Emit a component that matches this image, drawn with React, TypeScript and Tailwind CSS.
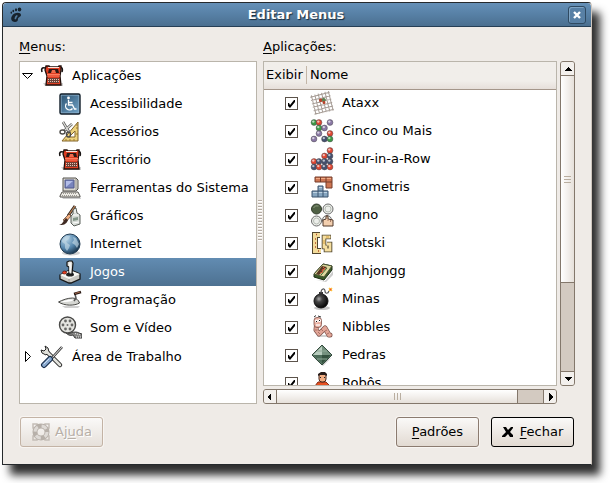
import type { ReactNode } from "react";

const Icon = ({ children }: { children: ReactNode }) => (
  <svg viewBox="0 0 24 24" className="block size-6 shrink-0" aria-hidden="true">
    {children}
  </svg>
);

const Typewriter = () => (
  <Icon>
    <path d="M3 19h20v3H5z" fill="#000" opacity=".18" />
    <path d="M2 8C1 5 2 3 5 4M22 8c1-3 0-5-2-5" fill="none" stroke="#171312" strokeWidth="1.600" />
    <path d="M6 2h3l1 1h8l1-1h2v4l-1 6 1 9H6l1-9-2-6z" fill="#dc3d22" stroke="#21100c" strokeWidth="1.300" />
    <path d="M8 3.500h11" stroke="#fbe2d8" />
    <path d="M9 5h9l1 4H8z" fill="#2c1815" />
    <path d="M11 9l1-3h3l1 3z" fill="#ef6a4b" />
    <path d="M7 10.500h13M7 12h13" stroke="#ff7d5e" />
    <path d="M8 14h11v5H8z" fill="#6d4238" />
    <path d="M8 15.500h11M8 17.500h11" stroke="#e3c3b5" strokeDasharray="1 1" />
  </Icon>
);

const Access = () => (
  <Icon>
    <defs>
      <linearGradient id="accessFill" x1="0" y1="0" x2="1" y2="1">
        <stop offset="0" stopColor="#2f5675" />
        <stop offset="1" stopColor="#6fa0c4" />
      </linearGradient>
    </defs>
    <rect x="2" y="2" width="20" height="20" rx="1.5" fill="#8fb2cc" stroke="#101d28" strokeWidth="1.4" />
    <rect x="3.5" y="3.5" width="17" height="17" fill="url(#accessFill)" />
    <circle cx="10.500" cy="6" r="1.400" fill="#fff" />
    <path d="M10.500 8v5h4l2 4h2M10.500 10.500h4M8.500 11.500a3.800 3.800 0 1 0 6 5" fill="none" stroke="#fff" strokeWidth="1.300" />
  </Icon>
);

const Scissors = () => (
  <Icon>
    <path d="M20 2v19H4z" fill="#edd27d" stroke="#82642b" />
    <path d="M17 11v6h-6z" fill="#fff" stroke="#82642b" />
    <path d="M18 5h2M18 8h2M18 14h2M8 19v2M12 19v2M16 19v2" stroke="#9b7a34" />
    <path d="M5 2l6 10M14 4L6 11" stroke="#555" strokeWidth="2.600" />
    <path d="M5 2l6 10M14 4L6 11" stroke="#deded9" strokeWidth="1.300" />
    <ellipse cx="4.500" cy="12" rx="2.500" ry="2" fill="none" stroke="#4d4b48" strokeWidth="1.400" />
    <ellipse cx="10.500" cy="14.500" rx="2" ry="2.500" fill="none" stroke="#4d4b48" strokeWidth="1.400" />
  </Icon>
);

const Computer = () => (
  <Icon>
    <path d="M3 20h19l1 3H5z" fill="#000" opacity=".2" />
    <path d="M5 2h13l2 2v9l-2 2H5z" fill="#d9d7cf" stroke="#55534f" />
    <path d="M18 3v11" stroke="#9d9b93" />
    <path d="M7 4h9v8H7z" fill="#7884bd" stroke="#535b8b" />
    <path d="M8 5h7l-7 6z" fill="#b3bde8" />
    <path d="M4 16h16l2 4v1H2v-1z" fill="#eceae4" stroke="#55534f" />
    <path d="M5 17.500h14M4 19.500h16" stroke="#99968f" strokeDasharray="1 1" />
  </Icon>
);

const Graphics = () => (
  <Icon>
    <path d="M17 2L10 12" stroke="#302620" strokeWidth="3" />
    <path d="M17 2L10 12" stroke="#bc8355" strokeWidth="1.300" />
    <path d="M11 10l2 2-5 6-3-2z" fill="#f0ae80" stroke="#503225" strokeWidth=".7" />
    <path d="M8 14l2 2c-2 5-5 5-9 5 4-1 4-4 7-7z" fill="#402b23" />
    <path d="M15 6l3-2 1 5 3 2v9l-6 2-3-3v-7l2-2z" fill="#d5dad5" stroke="#5b605b" />
    <path d="M15 11h6M15 19l6-1M17 5v4" stroke="#fff" />
    <path d="M15 14l5-1v3l-5 1z" fill="#839689" />
  </Icon>
);

const Globe = () => (
  <Icon>
    <defs>
      <radialGradient id="globeFill" cx=".3" cy=".25" r=".8">
        <stop offset="0" stopColor="#b9d6e9" />
        <stop offset=".6" stopColor="#5485ac" />
        <stop offset="1" stopColor="#1a354c" />
      </radialGradient>
    </defs>
    <ellipse cx="13" cy="21" rx="9" ry="2.500" fill="#000" opacity=".18" />
    <circle cx="12" cy="12" r="10" fill="url(#globeFill)" stroke="#253f55" />
    <path d="M4 8l4-4 4 0-1 3-3 2 1 2 3 2-1 3-2 3-2-3 0-4-3-2zM15 5l3 1 3 6-2 4-2-3-3-2 2-3z" fill="#c3d8e5" opacity=".65" />
  </Icon>
);

const Joystick = () => (
  <Icon>
    <path d="M2 15l8-4h5l7 3v5l-9 4h-2l-9-4z" fill="#c9c8c2" stroke="#171717" strokeWidth="1.300" />
    <path d="M2 15l9 4 11-5-8-3h-4z" fill="#f8f8f4" />
    <path d="M11 19v3" stroke="#999" />
    <ellipse cx="12" cy="14.500" rx="4" ry="2" fill="#242424" />
    <path d="M11 14V7L9 6V2l2-1h3l1 2-1 11z" fill="#dfdfdb" stroke="#111" strokeWidth="1.200" />
    <path d="M12 2.500v10" stroke="#fff" strokeWidth="1.400" />
    <ellipse cx="6.500" cy="12.500" rx="2" ry="1.500" fill="#ea3f20" stroke="#5f160d" strokeWidth=".7" />
  </Icon>
);

const Trowel = () => (
  <Icon>
    <path d="M4 18h18l-2 2H7z" fill="#000" opacity=".18" />
    <path d="M.5 14c4-2 9-4 14-4 4 0 6 2 7 5-5 3-15 3-21-1z" fill="#d6d7d3" stroke="#4a4a47" />
    <path d="M3 14c5-2 9-3 13-2-4 2-8 2-13 2z" fill="#fff" />
    <path d="M16 13l2-3-1-4" fill="none" stroke="#555" strokeWidth="1.500" />
    <path d="M16 6l7-2" stroke="#2b1a14" strokeWidth="2.800" />
    <path d="M17 5.500l5-1.500" stroke="#a5694d" />
  </Icon>
);

const Reel = () => (
  <Icon>
    <path d="M8 17c4 2 8-3 13 0l3 1v4h-7l-2-3c-3 1-5 0-7-2z" fill="#858583" stroke="#3c3c3c" />
    <path d="M17 17.500l6 1.500M18 21h5" stroke="#eee" strokeDasharray="1 1" />
    <circle cx="9.500" cy="9" r="8" fill="#e4e4e0" stroke="#4a4a48" strokeWidth="1.400" />
    <g fill="#686866">
      <circle cx="7.500" cy="5" r="1.400" /><circle cx="12" cy="5" r="1.400" />
      <circle cx="5" cy="9" r="1.400" /><circle cx="9.500" cy="9" r="1" />
      <circle cx="14" cy="9" r="1.400" /><circle cx="7.500" cy="13" r="1.400" />
      <circle cx="12" cy="13" r="1.400" />
    </g>
  </Icon>
);

const Tools = () => (
  <Icon>
    <path d="M7 7l13 13" stroke="#252525" strokeWidth="4.500" strokeLinecap="round" />
    <path d="M5 1l3 2 1 4-3 3-4-2-1-3 3 1 2-2z" fill="#deded7" stroke="#252525" />
    <path d="M7 7l13 13" stroke="#e2e2dc" strokeWidth="2.600" strokeLinecap="round" />
    <path d="M22 2L12 13" stroke="#222" strokeWidth="2.600" />
    <path d="M22 2L12 13" stroke="#ddd" strokeWidth="1.100" />
    <path d="M10 14l-6 6" stroke="#172c49" strokeWidth="6" strokeLinecap="round" />
    <path d="M10 14l-6 6" stroke="#89a9cf" strokeWidth="3.800" strokeLinecap="round" />
    <path d="M9 14l-5 5" stroke="#d0e0f2" strokeLinecap="round" />
  </Icon>
);

const Ball = ({ x, y, c }: { x: number; y: number; c: string }) => (
  <g>
    <circle cx={x} cy={y} r="2.900" fill={c} stroke="#4b464d" strokeWidth=".5" />
    <circle cx={x - 0.7} cy={y - 0.9} r="1.200" fill="#fff" opacity=".65" />
  </g>
);

const Ataxx = () => (
  <Icon>
    <g transform="rotate(-14 12 12)">
      <path d="M3.500 2v20M7 2v20M10.500 2v20M14 2v20M17.500 2v20M21 2v20M2 3.500h20M2 7h20M2 10.500h20M2 14h20M2 17.500h20M2 21h20" stroke="#a79d96" />
      <circle cx="11.500" cy="9" r="1.800" fill="#b9422a" />
      <circle cx="14.500" cy="9.500" r="2" fill="#5d7f50" />
      <circle cx="14" cy="12" r="1.500" fill="#b9422a" />
    </g>
  </Icon>
);

const Five = () => (
  <Icon>
    <Ball x={4} y={3.5} c="#3b9a45" /><Ball x={9} y={3.5} c="#e04631" /><Ball x={20} y={3.5} c="#8a78a5" />
    <Ball x={9} y={9} c="#3b9a45" /><Ball x={14.5} y={9} c="#8a78a5" />
    <Ball x={9} y={14.5} c="#8a78a5" /><Ball x={20} y={14.5} c="#e04631" />
    <Ball x={4} y={20} c="#8a78a5" /><Ball x={14.5} y={20} c="#44516f" /><Ball x={20} y={20} c="#3b9a45" />
  </Icon>
);

const Four = () => (
  <Icon>
    <Ball x={20} y={3.5} c="#e04631" />
    <Ball x={14.5} y={9} c="#e04631" /><Ball x={20} y={9} c="#44516f" />
    <Ball x={4} y={14.5} c="#e04631" /><Ball x={9} y={14.5} c="#44516f" /><Ball x={14.5} y={14.5} c="#44516f" /><Ball x={20} y={14.5} c="#44516f" />
    <Ball x={4} y={20} c="#44516f" /><Ball x={9} y={20} c="#e04631" /><Ball x={14.5} y={20} c="#44516f" /><Ball x={20} y={20} c="#e04631" />
  </Icon>
);

const Blocks = () => (
  <Icon>
    <path d="M5 2h17v11h-6V7H5z" fill="#cd7653" stroke="#743c2a" />
    <path d="M6 3.500h15" stroke="#f2ab86" />
    <path d="M10.500 2v5M16 2v5h6" stroke="#743c2a" fill="none" />
    <path d="M8 11h5v5h5v6H2v-6h6z" fill="#86a5bf" stroke="#3a536c" />
    <path d="M9 12.500h3M3 17.500h14" stroke="#bfd3e2" />
    <path d="M8 16h5M8 16v6M13 16v6" stroke="#3a536c" />
  </Icon>
);

const Iagno = () => (
  <Icon>
    <circle cx="6.500" cy="6" r="5" fill="#4f6044" stroke="#323c2c" />
    <path d="M3.500 5a4 4 0 0 1 5-2" stroke="#8b9b7d" fill="none" />
    <g fill="#eceeea" stroke="#6b6b6b">
      <circle cx="18" cy="6" r="5" /><circle cx="6.500" cy="18" r="5" /><circle cx="17" cy="17" r="4.500" />
    </g>
    <g fill="none" stroke="#b5bbb3"><circle cx="18" cy="6" r="3" /><circle cx="6.500" cy="18" r="3" /></g>
    <path d="M13 17l3-1v-3h2v3l5 1v6H13z" fill="#f3cfaf" stroke="#51382b" />
    <path d="M18 16v2M20.500 17v2" stroke="#a77c63" />
  </Icon>
);

const Klotski = () => (
  <Icon>
    <g fill="none" strokeLinejoin="miter">
      <path d="M10 4H5v16h6" stroke="#51462f" strokeWidth="6" />
      <path d="M10 4H5v16h6" stroke="#f3dc9a" strokeWidth="4" />
      <path d="M21 6h-7v10h2v3h4v-6h-3" stroke="#51462f" strokeWidth="4.600" />
      <path d="M20.500 6H14v10h2v3h4v-6h-3" stroke="#f6dfa0" strokeWidth="2.800" />
    </g>
    <path d="M6 3.500h1M5 8h1M5 12h1M5 16h1M8 20h1" stroke="#b44a26" strokeWidth="1.500" />
    <path d="M16 6h3M14 9v4" stroke="#d59f3f" />
  </Icon>
);

const Mahjongg = () => (
  <Icon>
    <path d="M6 21l9 1 8-10v4l-7 7z" fill="#000" opacity=".2" />
    <path d="M4 15l9-10 9 2v4l-8 10-10-3z" fill="#3a5a28" stroke="#1c2b14" />
    <path d="M4 15l9-10 9 2-8 11z" fill="#ded99f" stroke="#4b5535" />
    <path d="M12 7l5 1-8 8-3-1z" fill="#593823" />
    <path d="M13 8l2 2-3 1 1 2-3 1" fill="none" stroke="#d95b3a" />
    <path d="M17 9l-6 7" stroke="#3e632f" />
  </Icon>
);

const Bomb = () => (
  <Icon>
    <defs>
      <radialGradient id="bombFill" cx=".35" cy=".35" r=".65">
        <stop offset="0" stopColor="#aaa" />
        <stop offset=".35" stopColor="#444" />
        <stop offset="1" stopColor="#080808" />
      </radialGradient>
    </defs>
    <ellipse cx="12" cy="21" rx="8" ry="2" fill="#000" opacity=".22" />
    <circle cx="11" cy="14" r="7" fill="url(#bombFill)" stroke="#111" />
    <path d="M9 5h4v3H9z" fill="#333" />
    <path d="M11 6c0-5 4-5 4-2s3 3 4 0" fill="none" stroke="#555" strokeWidth="1.200" />
    <path d="M19 1l3 3M19 4l3-3" stroke="#ffca3d" strokeWidth="1.600" />
    <circle cx="20.500" cy="2.500" r="1" fill="#ef5832" />
  </Icon>
);

const Nibbles = () => (
  <Icon>
    <path d="M8 20h13v2H7z" fill="#000" opacity=".18" />
    <g fill="none" strokeLinejoin="round" strokeLinecap="round">
      <path d="M7 6l-1 9 3 4 6-6 4 7h1" stroke="#7c5149" strokeWidth="5" />
      <path d="M7 6l-1 9 3 4 6-6 4 7h1" stroke="#e3a698" strokeWidth="3.600" />
    </g>
    <rect x="4" y="2.500" width="7.500" height="10" rx="3" fill="#e9b1a3" stroke="#7c5149" strokeWidth=".8" />
    <path d="M4.500 15h3M10 19l-2-2M13 16l-2-2M17 15l-2 1M19 18l-2 1" stroke="#9b6559" strokeWidth=".8" />
    <path d="M4 2l2-1.500M8 1l3 1" stroke="#333" fill="none" />
    <circle cx="6.500" cy="6" r="1.500" fill="#fff" /><circle cx="9.500" cy="5.500" r="1.500" fill="#fff" />
    <path d="M6 6h1v1H6zM9 5h1v1H9z" fill="#111" />
    <path d="M6 10h4" stroke="#fff" strokeWidth="1.300" />
  </Icon>
);

const Gem = () => (
  <Icon>
    <path d="M4 15l9 8 9-9-9 6z" fill="#000" opacity=".2" />
    <path d="M12 2l10 10-10 10L2 12z" fill="#64836f" stroke="#344b3e" />
    <path d="M12 3v9H3z" fill="#b9cdbf" />
    <path d="M12 3l9 9h-9z" fill="#75927f" />
    <path d="M3 12h9v9z" fill="#4d6d5a" />
    <path d="M12 12h9l-9 9z" fill="#34523f" />
    <path d="M7 8l10 0M7 16l10 0" stroke="#91ab99" />
  </Icon>
);

const Robots = () => (
  <Icon>
    <path d="M5 23v-8l3-4h8l4 4v8" fill="#e75121" stroke="#812d17" />
    <path d="M8 16v7M17 16v7" stroke="#812d17" />
    <rect x="9" y="2" width="7" height="9" rx="3" fill="#f2ae83" stroke="#47291f" />
    <path d="M8 5V3l3-2h4l2 2v2l-2-1h-5z" fill="#281d1a" />
    <path d="M10 6.500h1M14 6.500h1" stroke="#222" />
  </Icon>
);

const menus = [
  { name: "Acessibilidade", icon: <Access /> },
  { name: "Acessórios", icon: <Scissors /> },
  { name: "Escritório", icon: <Typewriter /> },
  { name: "Ferramentas do Sistema", icon: <Computer /> },
  { name: "Gráficos", icon: <Graphics /> },
  { name: "Internet", icon: <Globe /> },
  { name: "Jogos", icon: <Joystick />, selected: true },
  { name: "Programação", icon: <Trowel /> },
  { name: "Som e Vídeo", icon: <Reel /> },
];

const games = [
  { name: "Ataxx", icon: <Ataxx /> },
  { name: "Cinco ou Mais", icon: <Five /> },
  { name: "Four-in-a-Row", icon: <Four /> },
  { name: "Gnometris", icon: <Blocks /> },
  { name: "Iagno", icon: <Iagno /> },
  { name: "Klotski", icon: <Klotski /> },
  { name: "Mahjongg", icon: <Mahjongg /> },
  { name: "Minas", icon: <Bomb /> },
  { name: "Nibbles", icon: <Nibbles /> },
  { name: "Pedras", icon: <Gem /> },
  { name: "Robôs", icon: <Robots /> },
];

const Arrow = ({ d }: { d: string }) => (
  <svg viewBox="0 0 8 8" className="size-2" shapeRendering="crispEdges" aria-hidden="true">
    <path d={d} fill="#000" />
  </svg>
);

const Mnemonic = ({ children }: { children: ReactNode }) => (
  <span className="underline decoration-1 underline-offset-2">{children}</span>
);

function MenuTree() {
  return (
    <ul role="tree" aria-labelledby="menus-label" className="min-h-0 flex-1 overflow-hidden border border-[#bab5ab] bg-white">
      <li role="treeitem" aria-expanded="true">
        <div className="flex h-7 items-center gap-2 pl-0.5">
          <svg viewBox="0 0 12 12" className="-mr-0.5 size-3" aria-hidden="true">
            <path d="M.5 3.500h10l-5 5z" fill="#fff" stroke="#000" />
          </svg>
          <Typewriter />
          <span>Aplicações</span>
        </div>
        <ul role="group">
          {menus.map((m) => (
            <li
              key={m.name}
              role="treeitem"
              aria-selected={!!m.selected}
              className={
                m.selected
                  ? "flex h-7 items-center gap-2 bg-linear-to-b from-[#628cb2] to-[#4d7191] pl-[38px] whitespace-nowrap text-white"
                  : "flex h-7 items-center gap-2 pl-[38px] whitespace-nowrap"
              }
            >
              {m.icon}
              {m.name}
            </li>
          ))}
        </ul>
      </li>
      <li role="treeitem" aria-expanded="false" className="flex h-[30px] items-center gap-2 pl-0.5">
        <svg viewBox="0 0 12 12" className="-mr-0.5 size-3" aria-hidden="true">
          <path d="M3.500.5v10l5-5z" fill="#fff" stroke="#000" />
        </svg>
        <Tools />
        Área de Trabalho
      </li>
    </ul>
  );
}

function GamesTable() {
  return (
    <div className="min-h-0 flex-1 overflow-hidden border border-[#bab5ab] bg-white">
      <table aria-labelledby="apps-label" className="w-full table-fixed border-collapse">
        <thead>
          <tr className="h-[27px] bg-linear-to-b from-[#f1eeea] from-70% to-[#e6dfda]">
            <th scope="col" className="w-[43px] border-b border-[#a4968a] p-0 text-left font-normal">
              <div className="border-r border-[#c3b6a8] pl-0.5">Exibir</div>
            </th>
            <th scope="col" className="border-b border-[#a4968a] p-0 pl-[3px] text-left font-normal">Nome</th>
          </tr>
        </thead>
        <tbody>
          {games.map((g) => (
            <tr key={g.name} className="h-7">
              <td className="p-0 pl-[21px]">
                <span className="grid size-[13px]">
                  <input
                    type="checkbox"
                    defaultChecked
                    aria-label={g.name}
                    className="peer col-start-1 row-start-1 size-[13px] appearance-none border border-[#5c534b] bg-white"
                  />
                  <svg viewBox="0 0 13 13" className="pointer-events-none invisible col-start-1 row-start-1 size-[13px] peer-checked:visible" aria-hidden="true">
                    <path d="M3 6v3l2 2 5-6V3H9L5 8 4 6z" fill="#000" />
                  </svg>
                </span>
              </td>
              <td className="p-0 pl-[3px]">
                <div className="flex items-center gap-2">
                  {g.icon}
                  {g.name}
                </div>
              </td>
            </tr>
          ))}
        </tbody>
      </table>
    </div>
  );
}

export default function App() {
  return (
    <div className="h-screen overflow-hidden bg-white pt-0.5 pr-[18px] pb-[18px] pl-0.5 font-['DejaVu_Sans',sans-serif] text-[13px] leading-[18px] text-black">
      <section className="flex h-full flex-col rounded-t-sm border border-[#25292c] border-r-[#cfc6bd] bg-[#efebe7] shadow-[8px_10px_9px_#2f2f2f]">
        <header className="flex h-6 shrink-0 items-center rounded-t-sm border-b border-[#263f56] bg-linear-to-b from-[#6590b7] via-[#5780a5] to-[#4b6f90] px-[5px]">
          <svg viewBox="0 0 16 16" className="size-4 shrink-0" fill="#17222c" aria-label="GNOME" role="img">
            <ellipse cx="11.500" cy="2.500" rx="1.800" ry="2" />
            <ellipse cx="8" cy="2.800" rx="1.100" ry="1.500" />
            <ellipse cx="5.300" cy="4" rx=".9" ry="1.300" />
            <ellipse cx="3.300" cy="5.700" rx=".8" ry="1.100" />
            <path d="M4 9c2-4 9-4 9-1 0 2-3 2-3 4s-1 3-3 3c-3 0-5-3-3-6zm3 1c-1 2 0 3 1 2s0-2 2-3c-1-1-2-1-3 1z" />
          </svg>
          <h1 className="min-w-0 flex-1 text-center text-[13px] font-bold text-white [text-shadow:1px_1px_1px_#182b3d]">Editar Menus</h1>
          <button type="button" aria-label="Fechar janela" className="grid size-[18px] place-items-center rounded-[3px] border border-[#2f4a62] bg-[#5880a5] shadow-[inset_1px_1px_#7fa4c4]">
            <svg viewBox="0 0 8 8" className="size-2" aria-hidden="true">
              <path d="M1 1l6 6M7 1L1 7" stroke="#fff" strokeWidth="2.400" />
            </svg>
          </button>
        </header>

        <main className="flex min-h-0 flex-1 flex-col px-4 pt-[11px] pb-[17px]">
          <div className="flex min-h-0 flex-1">
            <div className="flex w-[238px] shrink-0 flex-col">
              <h2 id="menus-label" className="mb-[5px]"><Mnemonic>M</Mnemonic>enus:</h2>
              <MenuTree />
            </div>
            <div role="separator" className="flex w-1.5 shrink-0 items-center justify-center">
              <span className="h-[42px] w-1 bg-[repeating-linear-gradient(to_bottom,#b5aca3_0_1px,#ffffff_1px_2px,#efebe7_2px_3px)]" />
            </div>
            <div className="flex min-w-0 flex-1 flex-col">
              <h2 id="apps-label" className="mb-[5px]"><Mnemonic>A</Mnemonic>plicações:</h2>
              <div className="flex min-h-0 flex-1 gap-[3px]">
                <div className="flex min-w-0 flex-1 flex-col gap-[3px]">
                  <GamesTable />
                  <div className="flex h-[15px] shrink-0 rounded-[3px] border border-[#83776b] bg-[#d3cac1]">
                    <button type="button" aria-label="Rolar à esquerda" className="grid w-[13px] place-items-center rounded-l-[2px] border-r border-[#83776b] bg-[#f3f0ed]">
                      <Arrow d="M1 4l4-4v8z" />
                    </button>
                    <div className="mr-[25px] flex flex-1 items-center justify-center gap-0.5 border-r border-[#83776b] bg-linear-to-b from-white via-[#f3f0ed] to-[#e6e0da]">
                      <i className="h-[7px] w-px bg-[#b9aea0]" />
                      <i className="h-[7px] w-px bg-[#b9aea0]" />
                      <i className="h-[7px] w-px bg-[#b9aea0]" />
                    </div>
                    <button type="button" aria-label="Rolar à direita" className="grid w-[13px] place-items-center rounded-r-[2px] border-l border-[#83776b] bg-[#f3f0ed]">
                      <Arrow d="M7 4l-4-4v8z" />
                    </button>
                  </div>
                </div>
                <div className="mb-[18px] flex w-[15px] shrink-0 flex-col rounded-[3px] border border-[#83776b] bg-[#d3cac1]">
                  <button type="button" aria-label="Rolar para cima" className="grid h-3.5 place-items-center rounded-t-[2px] border-b border-[#83776b] bg-[#f3f0ed]">
                    <Arrow d="M4 2l4 4H0z" />
                  </button>
                  <div className="flex flex-[207] flex-col items-center justify-center gap-0.5 border-b border-[#83776b] bg-linear-to-r from-white via-[#f3f0ed] to-[#e6e0da]">
                    <i className="h-px w-[7px] bg-[#b9aea0]" />
                    <i className="h-px w-[7px] bg-[#b9aea0]" />
                    <i className="h-px w-[7px] bg-[#b9aea0]" />
                  </div>
                  <div className="flex-[88]" />
                  <button type="button" aria-label="Rolar para baixo" className="grid h-3.5 place-items-center rounded-b-[2px] border-t border-[#83776b] bg-[#f3f0ed]">
                    <Arrow d="M4 6l4-4H0z" />
                  </button>
                </div>
              </div>
            </div>
          </div>

          <footer className="mt-[13px] flex h-[30px] shrink-0 gap-3 px-px">
            <button type="button" disabled className="mr-auto flex w-[83px] items-center justify-center gap-1 rounded-[3px] border border-[#c3b3a5] bg-linear-to-b from-[#faf9f8] to-[#e6e0da] text-[#b7afa7] shadow-[0_0_0_1px_#f8f5f2] [text-shadow:1px_1px_#ffffff]">
              <svg viewBox="0 0 20 20" className="size-5" aria-hidden="true">
                <path d="M2 2h4v4H2zM14 2h4v4h-4zM2 14h4v4H2zM14 14h4v4h-4z" fill="none" stroke="#c4bdb6" strokeWidth="1.500" />
                <circle cx="10" cy="10" r="6" fill="none" stroke="#b7b0a9" strokeWidth="5" />
                <circle cx="10" cy="10" r="6" fill="none" stroke="#dedad6" strokeWidth="3" strokeDasharray="5.400 4" />
              </svg>
              <span>Aj<Mnemonic>u</Mnemonic>da</span>
            </button>
            <button type="button" className="w-[83px] rounded-[3px] border border-[#8b7b70] bg-linear-to-b from-[#faf9f8] to-[#e2dad2] shadow-[0_0_0_1px_#f8f5f2]">
              <Mnemonic>P</Mnemonic>adrões
            </button>
            <button type="button" className="flex w-[83px] items-center justify-center gap-1.5 rounded-[3px] border border-black bg-linear-to-b from-[#faf9f8] to-[#e2dad2]">
              <svg viewBox="0 0 12 12" className="size-3" aria-hidden="true">
                <path d="M1 1h3l2 3 3-3h2v1L8 6l3 3v2H8L6 8l-3 3H0v-1l4-4z" fill="#000" />
              </svg>
              <span><Mnemonic>F</Mnemonic>echar</span>
            </button>
          </footer>
        </main>
      </section>
    </div>
  );
}
